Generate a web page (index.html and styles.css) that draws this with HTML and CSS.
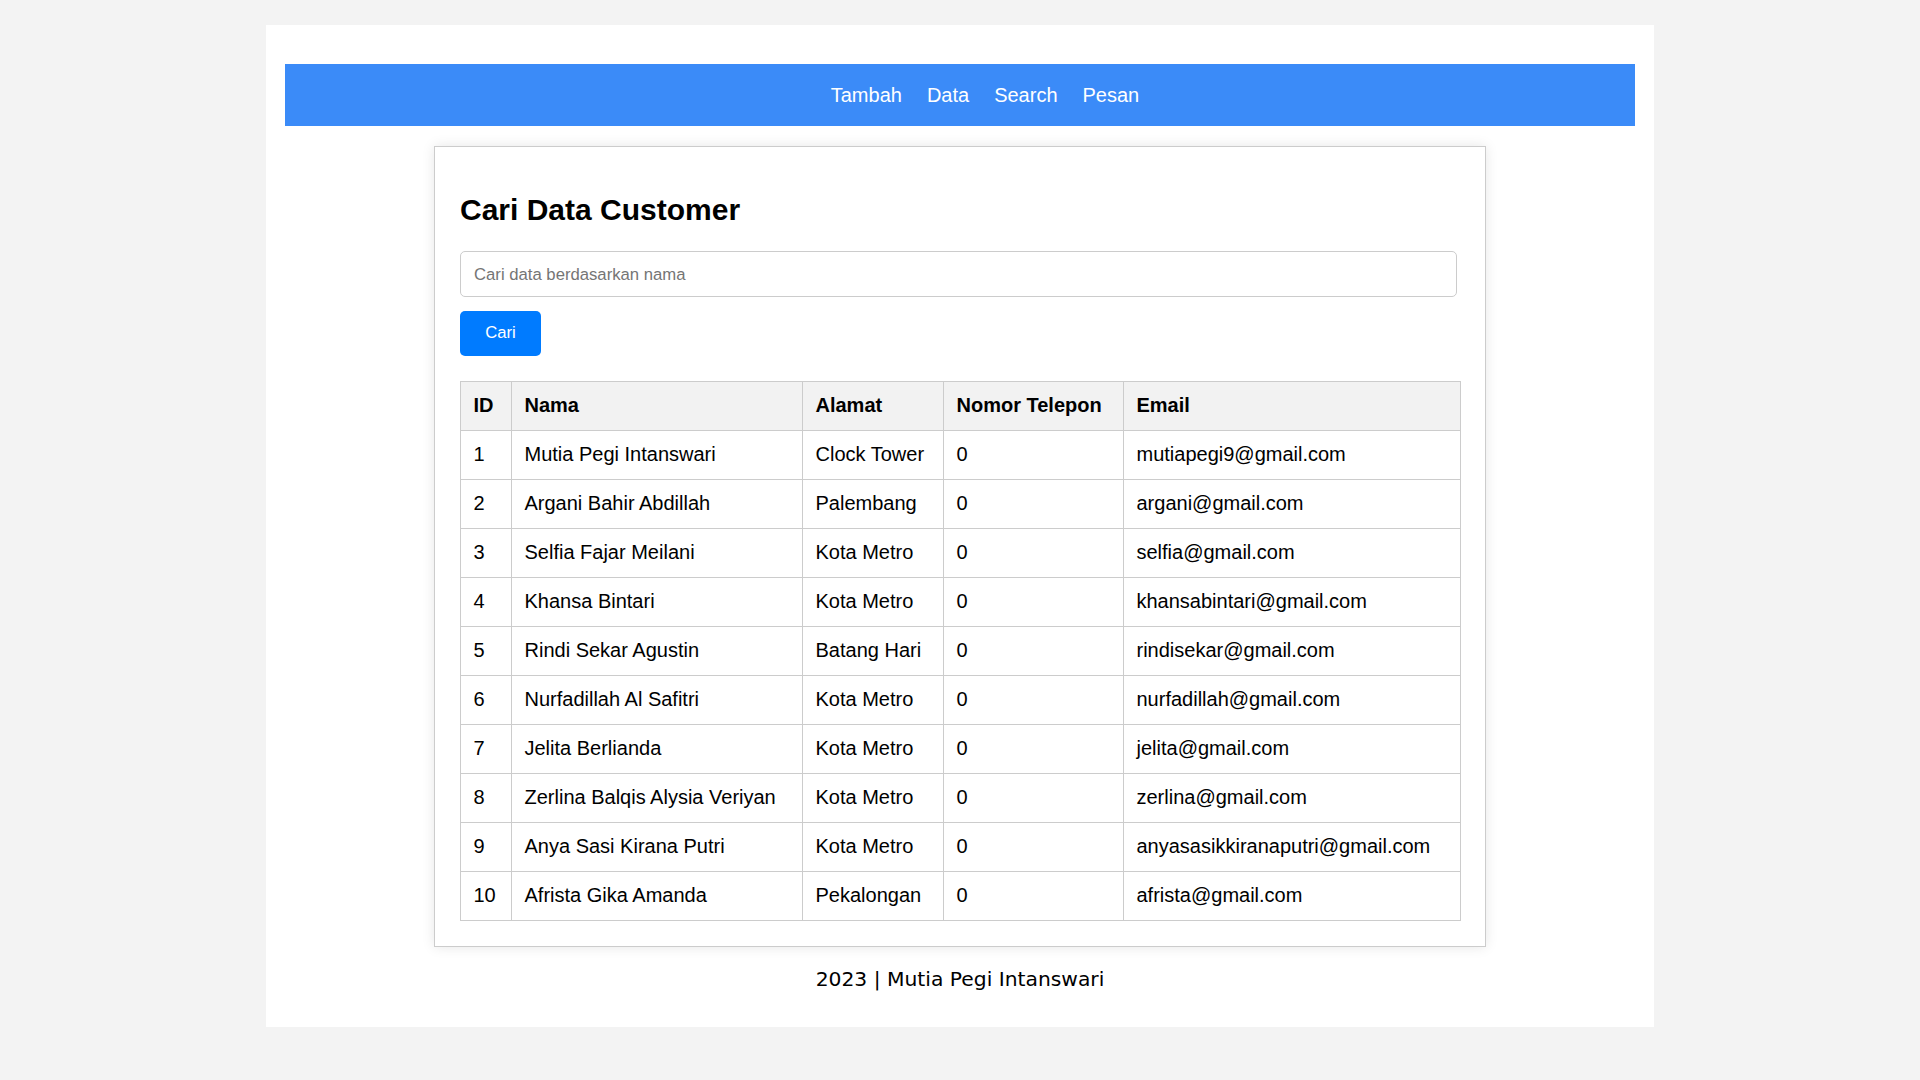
FILE: index.html
```html
<!DOCTYPE html>
<html lang="id">
<head>
<meta charset="utf-8">
<title>Cari Data Customer</title>
<link rel="stylesheet" href="styles.css">
</head>
<body>
<div class="container">
  <nav class="nav">
    <ul class="nav-list">
      <li><a href="#">Tambah</a></li>
      <li><a href="#">Data</a></li>
      <li><a href="#">Search</a></li>
      <li><a href="#">Pesan</a></li>
    </ul>
  </nav>
  <main class="card">
    <h2 class="title">Cari Data Customer</h2>
    <form class="search-form">
      <input class="search-input" type="text" placeholder="Cari data berdasarkan nama">
      <button class="search-btn" type="button">Cari</button>
    </form>
    <table class="data-table">
      <thead>
        <tr>
          <th class="c-id">ID</th>
          <th class="c-nama">Nama</th>
          <th class="c-alamat">Alamat</th>
          <th class="c-telp">Nomor Telepon</th>
          <th class="c-email">Email</th>
        </tr>
      </thead>
      <tbody>
        <tr><td>1</td><td>Mutia Pegi Intanswari</td><td>Clock Tower</td><td>0</td><td>mutiapegi9@gmail.com</td></tr>
        <tr><td>2</td><td>Argani Bahir Abdillah</td><td>Palembang</td><td>0</td><td>argani@gmail.com</td></tr>
        <tr><td>3</td><td>Selfia Fajar Meilani</td><td>Kota Metro</td><td>0</td><td>selfia@gmail.com</td></tr>
        <tr><td>4</td><td>Khansa Bintari</td><td>Kota Metro</td><td>0</td><td>khansabintari@gmail.com</td></tr>
        <tr><td>5</td><td>Rindi Sekar Agustin</td><td>Batang Hari</td><td>0</td><td>rindisekar@gmail.com</td></tr>
        <tr><td>6</td><td>Nurfadillah Al Safitri</td><td>Kota Metro</td><td>0</td><td>nurfadillah@gmail.com</td></tr>
        <tr><td>7</td><td>Jelita Berlianda</td><td>Kota Metro</td><td>0</td><td>jelita@gmail.com</td></tr>
        <tr><td>8</td><td>Zerlina Balqis Alysia Veriyan</td><td>Kota Metro</td><td>0</td><td>zerlina@gmail.com</td></tr>
        <tr><td>9</td><td>Anya Sasi Kirana Putri</td><td>Kota Metro</td><td>0</td><td>anyasasikkiranaputri@gmail.com</td></tr>
        <tr><td>10</td><td>Afrista Gika Amanda</td><td>Pekalongan</td><td>0</td><td>afrista@gmail.com</td></tr>
      </tbody>
    </table>
  </main>
  <footer class="footer">2023 | Mutia Pegi Intanswari</footer>
</div>
</body>
</html>
```
FILE: styles.css
```css
* { box-sizing: border-box; }

html, body {
  margin: 0;
  padding: 0;
  background: #f3f3f3;
}

body {
  font-family: "Liberation Sans", Arial, sans-serif;
  font-size: 20px;
  color: #000;
  padding-top: 25px;
  min-height: 1080px;
}

.container {
  width: 1388px;
  margin: 0 auto;
  background: #fff;
  padding: 39px 19px 19px;
}

.nav {
  background: #3b8bf8;
  height: 62px;
  display: flex;
  align-items: center;
}

.nav-list {
  list-style: none;
  margin: 0;
  padding: 0 0 0 50px;
  width: 100%;
  display: flex;
  justify-content: center;
}

.nav-list li {
  margin: 0 12.5px;
}

.nav-list a {
  color: #fff;
  text-decoration: none;
  font-size: 20px;
}

.card {
  width: 1052px;
  margin: 20px auto 0;
  background: #fff;
  border: 1px solid #cccccc;
  box-shadow: 0 0 12px rgba(0, 0, 0, 0.1);
  padding: 25px;
}

.title {
  font-size: 30px;
  font-weight: bold;
  margin: 20.5px 0 24.5px;
  line-height: 34px;
}

.search-form {
  display: flex;
  flex-direction: column;
  align-items: flex-start;
}

.search-input {
  width: 997px;
  height: 46px;
  border: 1px solid #cccccc;
  border-radius: 5px;
  padding: 2px 13px 0;
  font-family: "Liberation Sans", Arial, sans-serif;
  font-size: 16.7px;
  color: #333;
  outline: none;
}

.search-input::placeholder {
  color: #757575;
}

.search-btn {
  margin-top: 14px;
  width: 81px;
  height: 45px;
  background: #007bff;
  color: #fff;
  border: none;
  border-radius: 5px;
  font-family: "Liberation Sans", Arial, sans-serif;
  font-size: 16.7px;
  padding: 0 0 2px;
}

.data-table {
  width: 1000px;
  margin-top: 25px;
  border-collapse: collapse;
  table-layout: fixed;
}

.data-table th,
.data-table td {
  border: 1px solid #cccccc;
  padding: 12px 12.5px 13px;
  text-align: left;
  font-size: 20px;
  line-height: 23px;
  white-space: nowrap;
}

.data-table th {
  background: #f2f2f2;
  font-weight: bold;
}

.c-id { width: 51px; }
.c-nama { width: 291px; }
.c-alamat { width: 141px; }
.c-telp { width: 180px; }
.c-email { width: 337px; }

.footer {
  text-align: center;
  font-family: "DejaVu Sans", Verdana, sans-serif;
  font-size: 20.3px;
  line-height: 23px;
  padding: 21px 0 17px;
}
```
